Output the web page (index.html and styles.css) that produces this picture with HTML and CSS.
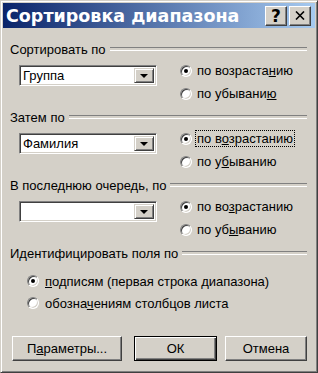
FILE: index.html
```html
<!DOCTYPE html>
<html>
  <head>
    <meta charset="UTF-8">
    <title>Сортировка диапазона</title>
    <link rel="stylesheet" href="styles.css">
  </head>
  <body>
    <div class="window">
      <div class="titlebar">
        <span class="title">Сортировка диапазона</span>
        <span class="tb-btn help">?</span>
        <span class="tb-btn close">
          <svg width="10" height="9" viewBox="0 0 10 9"><path d="M1 0.5 L9 8.5 M9 0.5 L1 8.5" stroke="#000" stroke-width="1.6"/></svg>
        </span>
      </div>
      <div class="body">
        <div class="group">
          <div class="legend"><span>Сортировать по</span></div>
          <div class="group-row">
            <div class="combo">
              <span class="combo-text">Группа</span>
              <span class="combo-btn"><svg width="8" height="4" viewBox="0 0 8 4"><path d="M0 0 H8 L4 4 Z" fill="#000"/></svg></span>
            </div>
            <div class="radios">
              <div class="radio checked"><span class="radio-box"></span><span>по возраста<u>н</u>ию</span></div>
              <div class="radio"><span class="radio-box"></span><span>по убывани<u>ю</u></span></div>
            </div>
          </div>
        </div>
        <div class="group">
          <div class="legend"><span>Затем по</span></div>
          <div class="group-row">
            <div class="combo">
              <span class="combo-text">Фамилия</span>
              <span class="combo-btn"><svg width="8" height="4" viewBox="0 0 8 4"><path d="M0 0 H8 L4 4 Z" fill="#000"/></svg></span>
            </div>
            <div class="radios">
              <div class="radio checked"><span class="radio-box"></span><span class="focus">по в<u>о</u>зрастанию</span></div>
              <div class="radio"><span class="radio-box"></span><span>по у<u>б</u>ыванию</span></div>
            </div>
          </div>
        </div>
        <div class="group">
          <div class="legend"><span>В последнюю очередь, по</span></div>
          <div class="group-row">
            <div class="combo">
              <span class="combo-text"></span>
              <span class="combo-btn"><svg width="8" height="4" viewBox="0 0 8 4"><path d="M0 0 H8 L4 4 Z" fill="#000"/></svg></span>
            </div>
            <div class="radios">
              <div class="radio checked"><span class="radio-box"></span><span>по во<u>з</u>растанию</span></div>
              <div class="radio"><span class="radio-box"></span><span>по уб<u>ы</u>ванию</span></div>
            </div>
          </div>
        </div>
        <div class="group last">
          <div class="legend"><span>Идентифицировать поля по</span></div>
          <div class="radios wide">
            <div class="radio checked"><span class="radio-box"></span><span><u>п</u>одписям (первая строка диапазона)</span></div>
            <div class="radio"><span class="radio-box"></span><span>обозна<u>ч</u>ениям столбцов листа</span></div>
          </div>
        </div>
        <div class="buttons">
          <div class="btn params">П<u>а</u>раметры...</div>
          <div class="btn ok default">ОК</div>
          <div class="btn cancel">Отмена</div>
        </div>
      </div>
    </div>
  </body>
</html>
```

FILE: styles.css
```css
* {
  box-sizing: border-box;
}
body {
  margin: 0;
  background: #d4d0c8;
  color: #000;
  font: 13px "Liberation Sans", Arial, sans-serif;
}
u {
  text-decoration-thickness: 1px;
  text-underline-offset: 1px;
}
.window {
  width: 318px;
  height: 373px;
  padding: 2px;
  background: #d4d0c8;
  border: 1px solid;
  border-color: #d4d0c8 #404040 #404040 #d4d0c8;
  box-shadow: inset 1px 1px #fff, inset -1px -1px #808080;
  display: flex;
  flex-direction: column;
}
.titlebar {
  height: 25px;
  display: flex;
  align-items: center;
  gap: 2px;
  padding: 0 4px 0 3px;
  background: linear-gradient(to right, #0a246a, #a6caf0);
}
.title {
  flex: 1;
  color: #fff;
  font: bold 17.5px "DejaVu Sans", sans-serif;
  white-space: nowrap;
}
.tb-btn {
  width: 22px;
  height: 20px;
  display: flex;
  align-items: center;
  justify-content: center;
  background: #d4d0c8;
  border: 1px solid;
  border-color: #fff #404040 #404040 #fff;
  box-shadow: inset -1px -1px #808080;
  font: bold 17px "DejaVu Sans", sans-serif;
}
.body {
  flex: 1;
  padding: 13px 8px 0 7px;
}
.group {
  height: 68px;
}
.legend {
  height: 16px;
  display: flex;
  align-items: center;
  gap: 4px;
}
.legend::after {
  content: "";
  flex: 1;
  height: 2px;
  border-top: 1px solid #808080;
  border-bottom: 1px solid #fff;
}
.group-row {
  display: flex;
  margin-top: 2px;
}
.combo {
  width: 138px;
  height: 21px;
  margin: 6px 0 0 9px;
  padding: 2px;
  display: flex;
  background: #fff;
  border: 1px solid;
  border-color: #808080 #fff #fff #808080;
  box-shadow: inset 1px 1px #404040, inset -1px -1px #d4d0c8;
}
.combo-text {
  flex: 1;
  padding-left: 1px;
  line-height: 15px;
}
.combo-btn {
  width: 20px;
  display: flex;
  align-items: center;
  justify-content: center;
  background: #d4d0c8;
  border: 1px solid;
  border-color: #d4d0c8 #404040 #404040 #d4d0c8;
  box-shadow: inset 1px 1px #fff, inset -1px -1px #808080;
}
.radios {
  margin-left: 23px;
}
.radio {
  height: 23px;
  display: flex;
  align-items: center;
  gap: 5px;
}
.radio-box {
  width: 12px;
  height: 12px;
  flex: none;
  position: relative;
  border-radius: 50%;
  background: #fff;
  border: 1px solid;
  border-color: #808080 #fff #fff #808080;
  box-shadow: inset 1px 1px #404040, inset -1px -1px #d4d0c8;
}
.checked .radio-box::after {
  content: "";
  position: absolute;
  left: 3px;
  top: 3px;
  width: 4px;
  height: 4px;
  border-radius: 50%;
  background: #000;
}
.focus {
  outline: 1px dotted #000;
  padding: 0 1px;
  margin-left: -1px;
}
.group.last {
  height: auto;
}
.radios.wide {
  margin: 9px 0 0 17px;
}
.radios.wide .radio {
  height: 22px;
  gap: 6px;
}
.buttons {
  display: flex;
  margin: 22px 0 0 2px;
}
.btn {
  height: 25px;
  display: flex;
  align-items: center;
  justify-content: center;
  background: #d4d0c8;
  border: 1px solid;
  border-color: #fff #404040 #404040 #fff;
  box-shadow: inset -1px -1px #808080;
}
.btn.params {
  width: 110px;
}
.btn.ok {
  width: 83px;
  margin-left: 12px;
}
.btn.default {
  border-color: #000;
  box-shadow: inset 1px 1px #fff, inset -1px -1px #404040, inset -2px -2px #808080;
}
.btn.cancel {
  width: 82px;
  margin-left: 8px;
}
```
